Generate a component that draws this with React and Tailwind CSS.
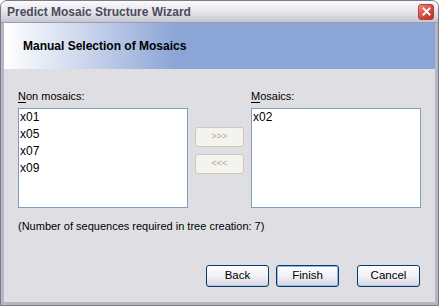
export default function App() {
  const font = { fontFamily: '"Liberation Sans", Arial, sans-serif' };
  const btn =
    "w-[63px] h-[22px] rounded-[3px] border border-[#003c74] bg-gradient-to-b from-[#ffffff] via-[#f1f1f6] to-[#d6d5e2] text-[11.5px] text-black flex items-center justify-center shadow-[inset_0_-1px_0_#c4c3d4]";
  const smallBtn =
    "w-[49px] h-[20px] rounded-[3px] border border-[#cac8bb] bg-[#f4f3ee] text-[9px] text-[#aca899] flex items-center justify-center";
  return (
    <div className="w-[439px] h-[306px] overflow-hidden bg-white" style={font}>
      <div className="w-full h-full flex flex-col rounded-t-[7px] border border-[#7a7a8a] bg-[#dfdfe3]">
        {/* Title bar */}
        <div className="h-[22px] shrink-0 flex items-center justify-between pl-[6px] pr-[4px] rounded-t-[6px] bg-gradient-to-b from-[#fafafc] via-[#e6e6ec] to-[#c6c6d2] border-b border-[#9d9daf]">
          <span className="text-[12px] font-bold text-[#4a4a58]">
            Predict Mosaic Structure Wizard
          </span>
          <div className="w-[16px] h-[16px] rounded-[3px] border border-[#b04040] bg-gradient-to-br from-[#f08a80] via-[#d84c3e] to-[#b83024] flex items-center justify-center">
            <svg width="9" height="9" viewBox="0 0 9 9">
              <path d="M1.5 1.5 L7.5 7.5 M7.5 1.5 L1.5 7.5" stroke="white" strokeWidth="2" strokeLinecap="square" />
            </svg>
          </div>
        </div>
        <div className="flex-1 flex flex-col border-x-[3px] border-b-[3px] border-[#b6b6c4]">
          {/* Header band */}
          <div className="h-[46px] shrink-0 flex items-center pl-[19px] bg-[linear-gradient(to_right,#ffffff_0px,#c5d1ea_90px,#8ba5d6_172px,#8ba5d6_100%)]">
            <span className="text-[12px] font-bold text-black">Manual Selection of Mosaics</span>
          </div>
          {/* Body */}
          <div className="flex-1 flex flex-col pl-[14px] pr-[14px] pt-[21px]">
            <div className="flex">
              <div className="flex flex-col">
                <div className="text-[11px] text-black h-[18px] leading-[13px]">
                  <span className="underline underline-offset-2">N</span>on mosaics:
                </div>
                <div className="w-[170px] h-[100px] border border-[#7f9db9] bg-white pl-[1px] text-[12px] leading-[17px] text-black">
                  <div>x01</div>
                  <div>x05</div>
                  <div>x07</div>
                  <div>x09</div>
                </div>
              </div>
              <div className="flex flex-col gap-[7px] pt-[37px] pl-[7px] pr-[7px]">
                <div className={smallBtn}>&gt;&gt;&gt;</div>
                <div className={smallBtn}>&lt;&lt;&lt;</div>
              </div>
              <div className="flex flex-col">
                <div className="text-[11px] text-black h-[18px] leading-[13px]">
                  <span className="underline underline-offset-2">M</span>osaics:
                </div>
                <div className="w-[170px] h-[100px] border border-[#7f9db9] bg-white pl-[1px] text-[12px] leading-[17px] text-black">
                  <div>x02</div>
                </div>
              </div>
            </div>
            <div className="text-[11px] text-black mt-[10px]">
              (Number of sequences required in tree creation: 7)
            </div>
            <div className="flex-1" />
            <div className="flex justify-end items-center pb-[15px] pr-[1px]">
              <div className={btn}>Back</div>
              <div className={btn + " ml-[7px] border-[#1a4f92] shadow-[inset_0_0_0_1px_#9cb5e0]"}>Finish</div>
              <div className={btn + " ml-[18px]"}>Cancel</div>
            </div>
          </div>
        </div>
      </div>
    </div>
  );
}
